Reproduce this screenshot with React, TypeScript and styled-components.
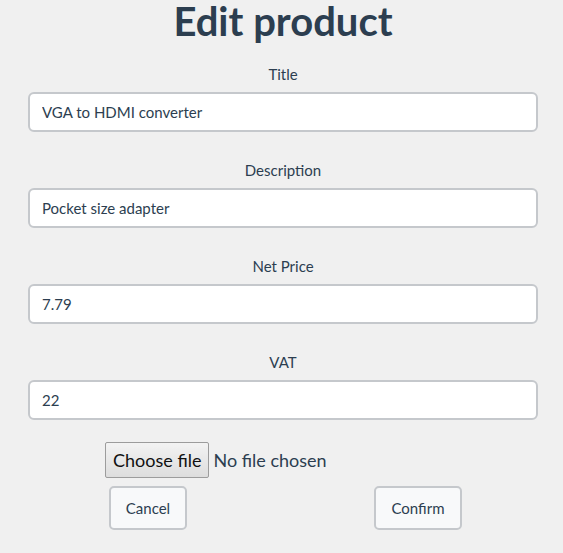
import React, { useState } from 'react';
import styled, { createGlobalStyle } from 'styled-components';

const GlobalStyle = createGlobalStyle`
  body {
    margin: 0;
    background: #f0f0f0;
    font-family: Lato, "Liberation Sans", sans-serif;
    color: #2c3e50;
  }
`;

const Page = styled.div`
  display: flex;
  flex-direction: column;
  padding: 0 25px 0 28px;
`;

const Heading = styled.h1`
  margin: 0;
  padding-top: 1px;
  font-size: 40px;
  line-height: 40px;
  font-weight: 700;
  text-align: center;
  color: #2c3e50;
`;

const Form = styled.form`
  display: flex;
  flex-direction: column;
  gap: 29px;
  margin-top: 24px;
`;

const Field = styled.div`
  display: flex;
  flex-direction: column;
  gap: 9px;
`;

const Label = styled.label`
  font-size: 15px;
  line-height: 18px;
  text-align: center;
`;

const Input = styled.input`
  box-sizing: border-box;
  width: 100%;
  height: 40px;
  padding: 0 12px;
  border: 2px solid #c5c8cc;
  border-radius: 6px;
  background: #fff;
  font-family: Lato, "Liberation Sans", sans-serif;
  font-size: 15px;
  color: #2c3e50;
  outline: none;
`;

const FileRow = styled.label`
  display: flex;
  align-items: center;
  gap: 4px;
  padding-left: 77px;
  margin-top: -7px;
  font-size: 18px;
  cursor: pointer;
`;

const HiddenFile = styled.input`
  display: none;
`;

const FileButton = styled.span`
  box-sizing: border-box;
  height: 36px;
  padding: 0 7px;
  display: flex;
  align-items: center;
  border: 1px solid #9c9c9c;
  border-radius: 2px;
  background: linear-gradient(#f3f3f3, #dddddd);
  color: #111;
`;

const FileName = styled.span`
  color: #2c3e50;
`;

const Actions = styled.div`
  display: grid;
  grid-template-columns: 270px 270px;
  justify-content: center;
  justify-items: center;
  margin-top: -21px;
`;

const Button = styled.button`
  box-sizing: border-box;
  height: 44px;
  padding: 0 15px;
  border: 2px solid #c5c8cc;
  border-radius: 5px;
  background: #f8f9fa;
  font-family: Lato, "Liberation Sans", sans-serif;
  font-size: 15px;
  color: #2c3e50;
  cursor: pointer;
`;

const fields = [
  { label: 'Title', value: 'VGA to HDMI converter' },
  { label: 'Description', value: 'Pocket size adapter' },
  { label: 'Net Price', value: '7.79' },
  { label: 'VAT', value: '22' },
];

const App = () => {
  const [fileName, setFileName] = useState('');

  return (
    <Page>
      <GlobalStyle />
      <Heading>Edit product</Heading>
      <Form onSubmit={(e) => e.preventDefault()}>
        {fields.map((f) => (
          <Field key={f.label}>
            <Label>{f.label}</Label>
            <Input defaultValue={f.value} />
          </Field>
        ))}
        <FileRow>
          <HiddenFile
            type="file"
            onChange={(e) => setFileName(e.target.files?.[0]?.name || '')}
          />
          <FileButton>Choose file</FileButton>
          <FileName>{fileName || 'No file chosen'}</FileName>
        </FileRow>
        <Actions>
          <Button type="button">Cancel</Button>
          <Button type="submit">Confirm</Button>
        </Actions>
      </Form>
    </Page>
  );
};

export default App;
